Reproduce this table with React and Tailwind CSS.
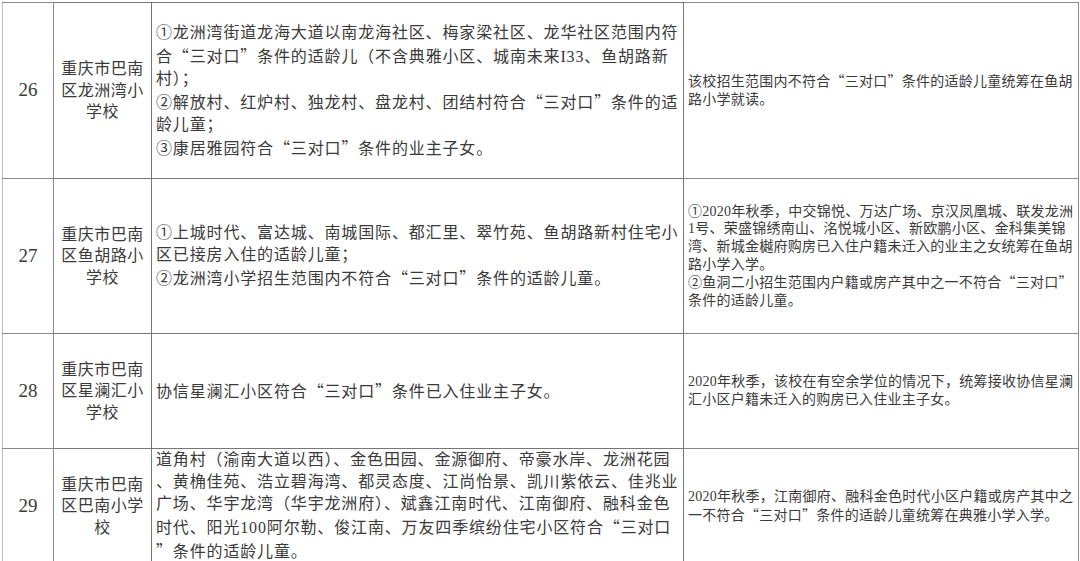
const rows = [
  {
    no: "26",
    h: "h-[176px]",
    school: ["重庆市巴南", "区龙洲湾小", "学校"],
    scope: [
      "①龙洲湾街道龙海大道以南龙海社区、梅家梁社区、龙华社区范围内符",
      "合“三对口”条件的适龄儿（不含典雅小区、城南未来I33、鱼胡路新",
      "村）；",
      "②解放村、红炉村、独龙村、盘龙村、团结村符合“三对口”条件的适",
      "龄儿童；",
      "③康居雅园符合“三对口”条件的业主子女。",
    ],
    note: ["该校招生范围内不符合“三对口”条件的适龄儿童统筹在鱼胡", "路小学就读。"],
  },
  {
    no: "27",
    h: "h-[155px]",
    school: ["重庆市巴南", "区鱼胡路小", "学校"],
    scope: [
      "①上城时代、富达城、南城国际、都汇里、翠竹苑、鱼胡路新村住宅小",
      "区已接房入住的适龄儿童；",
      "②龙洲湾小学招生范围内不符合“三对口”条件的适龄儿童。",
    ],
    note: [
      "①2020年秋季，中交锦悦、万达广场、京汉凤凰城、联发龙洲",
      "1号、荣盛锦绣南山、洺悦城小区、新欧鹏小区、金科集美锦",
      "湾、新城金樾府购房已入住户籍未迁入的业主之女统筹在鱼胡",
      "路小学入学。",
      "②鱼洞二小招生范围内户籍或房产其中之一不符合“三对口”",
      "条件的适龄儿童。",
    ],
  },
  {
    no: "28",
    h: "h-[115px]",
    school: ["重庆市巴南", "区星澜汇小", "学校"],
    scope: ["协信星澜汇小区符合“三对口”条件已入住业主子女。"],
    note: ["2020年秋季，该校在有空余学位的情况下，统筹接收协信星澜", "汇小区户籍未迁入的购房已入住业主子女。"],
  },
  {
    no: "29",
    h: "h-[111px]",
    school: ["重庆市巴南", "区巴南小学", "校"],
    scope: [
      "道角村（渝南大道以西）、金色田园、金源御府、帝豪水岸、龙洲花园",
      "、黄桷佳苑、浩立碧海湾、都灵态度、江尚怡景、凯川紫依云、佳兆业",
      "广场、华宇龙湾（华宇龙洲府）、斌鑫江南时代、江南御府、融科金色",
      "时代、阳光100阿尔勒、俊江南、万友四季缤纷住宅小区符合“三对口",
      "”条件的适龄儿童。",
    ],
    note: ["2020年秋季，江南御府、融科金色时代小区户籍或房产其中之", "一不符合“三对口”条件的适龄儿童统筹在典雅小学入学。"],
  },
];

// curly quotes should be full width like the rest of the Chinese text
function Line({ text }) {
  const parts = text.split(/([“”])/);
  return (
    <div className="whitespace-nowrap">
      {parts.map((p, i) =>
        p === "“" || p === "”" ? (
          <span key={i} className="font-['Noto_Sans_CJK_SC',sans-serif]">{p}</span>
        ) : (
          p
        )
      )}
    </div>
  );
}

export default function App() {
  return (
    <div className="h-[561px] w-[1080px] overflow-hidden bg-white pl-[2px] pt-[2px] font-['Liberation_Serif','Noto_Sans_CJK_SC',serif] text-[#3a3a3a]">
      <table className="w-[1076px] table-fixed border-collapse border border-[#c4c4c4]">
        <colgroup>
          <col className="w-[51px]" />
          <col className="w-[98px]" />
          <col className="w-[532px]" />
          <col className="w-[395px]" />
        </colgroup>
        <tbody>
          {rows.map((r, i) => (
            <tr key={r.no} className={`${r.h} ${i === rows.length - 1 ? "border-b border-[#777]" : ""}`}>
              <td className="border border-[#8a8a8a] border-l-[#c4c4c4] p-0 text-center text-[19px]">{r.no}</td>
              <td className="border border-[#777] p-0 text-center text-[16px] leading-[21.5px] tracking-[0.5px]">
                {r.school.map((s) => (
                  <div key={s}>{s}</div>
                ))}
              </td>
              <td className="border border-[#777] px-[4px] py-0 text-[16px] leading-[22px] tracking-[0.85px]">
                {r.scope.map((s, j) => (
                  <Line key={j} text={s} />
                ))}
              </td>
              <td className="border border-[#8a8a8a] px-[4px] py-0 text-[14px] leading-[17.6px] tracking-[0.25px]">
                {r.note.map((s, j) => (
                  <Line key={j} text={s} />
                ))}
              </td>
            </tr>
          ))}
        </tbody>
      </table>
    </div>
  );
}
